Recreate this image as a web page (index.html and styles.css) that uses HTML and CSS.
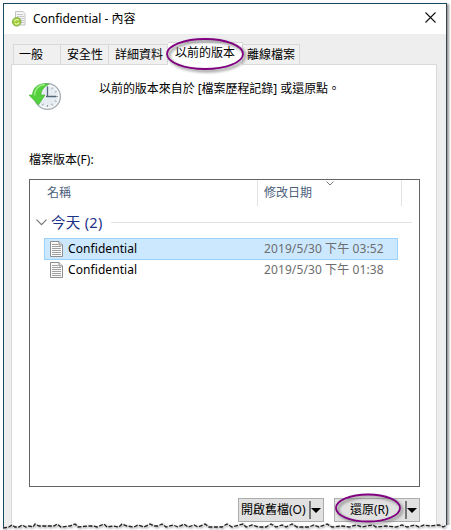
FILE: index.html
```html
<!DOCTYPE html>
<html lang="zh-Hant">
<head>
<meta charset="utf-8">
<title>Confidential - 內容</title>
<link rel="stylesheet" href="styles.css">
</head>
<body>
<svg class="defs" width="0" height="0">
  <symbol id="doc" viewBox="0 0 13 16">
    <path d="M.5.5h8.500l3.500 3.500v11.500h-12z" fill="#fafafa" stroke="#8f8f8f"/>
    <path d="M9 .5v3.500h3.500" fill="#ddd" stroke="#8f8f8f"/>
    <path d="M2 3.500h6M2 5.500h9M2 7.500h9M2 9.500h9M2 11.500h9M2 13.500h9" stroke="#a0a0a0"/>
  </symbol>
</svg>
<div class="window">
  <header class="titlebar">
    <svg class="app-icon" width="15" height="16" viewBox="0 0 15 16">
      <path d="M3.500.5h7.500l2 2v11.500h-9.500z" fill="#f4f4f4" stroke="#c4c4c4"/>
      <path d="M5 3.500h6M5 5.500h7M5 7.500h7M5 9.500h7M8 11.500h4" stroke="#c8c8c8"/>
      <circle cx="4.700" cy="10.800" r="4.300" fill="#9fca3c" stroke="#6fa63a" stroke-width=".8"/>
      <path d="M2.400 10.400a2.500 2.300 0 0 1 4.300-1.100M7 11.300a2.500 2.300 0 0 1-4.300 1" fill="none" stroke="#e6f59c" stroke-width="1.300"/>
    </svg>
    <h1>Confidential - 內容</h1>
    <svg class="close" width="11" height="11" viewBox="0 0 11 11"><path d="M.5.5l10 10M10.500.5l-10 10" stroke="#111" stroke-width="1.100"/></svg>
  </header>
  <nav class="tabs">
    <span class="tab t1">一般</span><span class="tab t2">安全性</span><span class="tab t3">詳細資料</span><span class="tab active">以前的版本<svg class="ring ring-tab" width="84" height="38" viewBox="0 0 84 38"><ellipse cx="40" cy="17" rx="38" ry="15"/></svg></span><span class="tab t5">離線檔案</span>
  </nav>
  <main class="panel">
    <section class="intro">
      <svg width="34" height="30" viewBox="0 0 34 30">
        <circle cx="18.500" cy="14.500" r="12.900" fill="#e6edf2" stroke="#a5adb3" stroke-width="1.300"/>
        <circle cx="18.500" cy="14.500" r="11.300" fill="none" stroke="#fff"/>
        <path d="M18.500 4v2M18.500 23v2M27 14.500h2M23.700 5.500l-1 1.700M27.600 9.300l-1.700 1M27.600 19.700l-1.700-1M23.700 23.500l-1-1.700M13.300 23.500l1-1.700" stroke="#8e9ba3"/>
        <path d="M18.500 5v10M17 14.500h10" stroke="#56697a" stroke-width="1.300"/>
        <path d="M20 2C12 .5 4 3.500 3.500 13H0l9.500 10 6.500-10h-4C12 8 15 5 20 2z" fill="#54cf3d" stroke="#3fb033" stroke-width=".6"/>
        <path d="M16 2.500C9.500 3 6 7 5.500 13.500" fill="none" stroke="#9aef83" stroke-width="1.300"/>
      </svg>
      <p>以前的版本來自於 [檔案歷程記錄] 或還原點。</p>
    </section>
    <p class="list-label">檔案版本(F):</p>
    <section class="list">
      <div class="columns">
        <span class="col-name">名稱</span>
        <span class="col-date">修改日期<svg class="sort" width="8" height="5" viewBox="0 0 8 5"><path d="M.5.5L4 4 7.500.5" fill="none" stroke="#777"/></svg></span>
      </div>
      <div class="group">
        <svg width="11" height="7" viewBox="0 0 11 7"><path d="M.5.700l5 5 5-5" fill="none" stroke="#777" stroke-width="1.200"/></svg>
        <span>今天 (2)</span><i></i>
      </div>
      <div class="row selected"><svg width="13" height="16"><use href="#doc"/></svg><span class="name">Confidential</span><time>2019/5/30 下午 03:52</time></div>
      <div class="row"><svg width="13" height="16"><use href="#doc"/></svg><span class="name">Confidential</span><time>2019/5/30 下午 01:38</time></div>
    </section>
    <footer class="actions">
      <button class="open"><span>開啟舊檔(O)</span><b></b></button>
      <button class="restore"><span>還原(R)</span><b></b><svg class="ring ring-button" width="74" height="34" viewBox="0 0 74 34"><ellipse cx="33" cy="15" rx="32" ry="13.500"/></svg></button>
    </footer>
  </main>
</div>
<svg class="torn" width="451" height="8" viewBox="0 0 451 8">
  <path class="paper" d="M0 8V5H4L9 4L12 2L15 4H19L22 2L26 4L29 3L33 4L35 1L39 3L54 3L57 1L61 4L70 3L75 1L78 4L88 3L93 3L97 4L104 1L107 4L113 3L119 4L122 1L127 3L134 4L138 2L144 4L150 1L154 3L158 3L162 1L166 4L173 2L178 4L184 1L188 4L194 2L198 4L205 1L209 4L222 4L227 1L232 4L243 1L246 4L252 2L258 4L266 4L271 1L276 4L282 2L286 4L292 1L297 4L309 4L314 2L319 4L327 1L332 4L342 3L349 4L356 2L362 4L373 2L376 4L386 3L396 4L402 2L407 4L415 2L419 4L424 2L430 3L439 2L443 4L447 2H451V8z"/>
  <path class="edge" d="M3 5L9 4L12 2L15 4H19L22 2L26 4L29 3L33 4L35 1L39 3L54 3L57 1L61 4L70 3L75 1L78 4L88 3L93 3L97 4L104 1L107 4L113 3L119 4L122 1L127 3L134 4L138 2L144 4L150 1L154 3L158 3L162 1L166 4L173 2L178 4L184 1L188 4L194 2L198 4L205 1L209 4L222 4L227 1L232 4L243 1L246 4L252 2L258 4L266 4L271 1L276 4L282 2L286 4L292 1L297 4L309 4L314 2L319 4L327 1L332 4L342 3L349 4L356 2L362 4L373 2L376 4L386 3L396 4L402 2L407 4L415 2L419 4L424 2L430 3L439 2L443 4L447 2"/>
</svg>
</body>
</html>
```

FILE: styles.css
```css
* { box-sizing: border-box; }
body { margin: 0; width: 451px; height: 530px; overflow: hidden; background: #fff; font: 12px/16px "Noto Sans", "Noto Sans CJK TC", sans-serif; color: #000; }
h1, p { margin: 0; font-size: 12px; font-weight: 400; }
svg { display: block; flex: none; }
.defs { position: absolute; }
.window { margin: 3px 0 0 3px; width: 444px; height: 524px; background: #eee; border: 1px solid #174a61; border-bottom: 0; border-right-color: #36454d; box-shadow: 2px 1px 2px #999; }
.titlebar { height: 30px; background: #fff; display: flex; align-items: center; padding: 0 10px 0 8px; }
.titlebar h1 { margin: -1px 0 0 6px; flex: 1; font-size: 12px; }
.close { margin-top: -3px; }
.tabs { display: flex; align-items: flex-end; height: 30px; padding-left: 9px; }
.tab { height: 20px; border: 1px solid #d9d9d9; border-width: 1px 1px 0 0; background: #f0f0f0; white-space: nowrap; line-height: 20px; padding-left: 6px; font-size: 12px; }
.t1 { width: 48px; border-left-width: 1px; padding-left: 5px; }
.t2 { width: 48px; }
.t3 { width: 59px; }
.active { position: relative; z-index: 2; width: 75px; height: 23px; margin-bottom: -1px; padding-left: 7px; background: #fff; }
.t5 { width: 57px; padding-left: 4px; }
.ring { position: absolute; overflow: visible; fill: none; stroke: #800080; stroke-width: 1.8px; filter: drop-shadow(2px 2px 1.5px #777); }
.ring-tab { left: -3px; top: -6px; }
.panel { margin-left: 7px; width: 426px; height: 464px; background: #fff; border: 1px solid #d9d9d9; border-bottom: 0; padding: 0 13px 0 17px; }
.intro { display: flex; height: 87px; padding-top: 17px; }
.intro p { margin: -1px 0 0 36px; letter-spacing: -.05px; }
.list-label { height: 26px; }
.list { height: 308px; width: 391px; border: 1px solid #646464; margin-top: 1px; }
.columns { height: 26px; display: flex; color: #4c607a; line-height: 25px; }
.col-name { width: 228px; padding-left: 17px; border-right: 1px solid #e2e2e2; }
.col-date { position: relative; width: 144px; padding-left: 6px; border-right: 1px solid #e2e2e2; }
.sort { position: absolute; left: 68px; top: 1px; }
.group { display: flex; align-items: center; height: 32px; padding: 0 7px 0 6px; color: #1e3287; font-size: 14.500px; }
.group span { margin: 0 8px 0 4px; letter-spacing: .3px; }
.group i { flex: 1; height: 1px; background: #e2e2e2; }
.row { display: flex; align-items: center; width: 354px; height: 20px; margin-left: 14px; padding-left: 6px; }
.row.selected { height: 22px; padding-left: 5px; border: 1px solid #99d1ff; background: #cce8ff; }
.name { margin-left: 5px; width: 196px; letter-spacing: .08px; }
.row time { color: #6d6d6d; white-space: nowrap; letter-spacing: .1px; }
.actions { display: flex; gap: 10px; padding: 11px 0 0 209px; }
button { position: relative; display: flex; align-items: center; height: 24px; padding: 0; border: 1px solid #adadad; background: #e1e1e1; font: inherit; color: #000; }
button span { flex: 1; white-space: nowrap; margin-top: -1px; }
button b { width: 14px; height: 18px; border-left: 2px solid #777; display: flex; align-items: center; }
button b::after { content: ""; border: 5px solid transparent; border-top-color: #000; border-bottom: 0; }
.open { width: 86px; }
.open span { text-align: left; padding-left: 2px; }
.restore { width: 86px; }
.restore span { text-align: left; padding-left: 15px; }
.ring-button { left: 0; top: -6px; }
.torn { position: absolute; left: 0; top: 523px; overflow: visible; }
.paper { fill: #fff; }
.edge { fill: none; stroke: #222; stroke-width: 1.3px; stroke-dasharray: 4 1.5; filter: drop-shadow(1px 1px 1px #777); }
```
